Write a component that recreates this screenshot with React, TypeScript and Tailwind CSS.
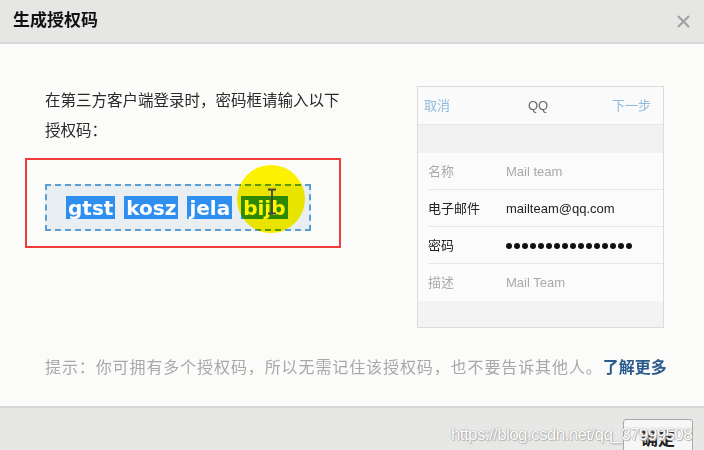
import React from "react";

const CJK = "font-['Liberation_Sans','Noto_Sans_CJK_SC',sans-serif]";

const ROWS = [
  { label: "名称", value: "Mail team", dim: true },
  { label: "电子邮件", value: "mailteam@qq.com", dim: false },
  { label: "密码", value: "", dim: false, dots: true },
  { label: "描述", value: "Mail Team", dim: true },
];

const WORDS = ["gtst", "kosz", "jela", "bijb"];

function PhonePanel() {
  return (
    <div className="ml-[76px] flex h-[242px] w-[247px] flex-col border border-[#dcdcdc] bg-[#fafafa]">
      {/* 顶部导航 */}
      <div className="flex h-[38px] items-center justify-between border-b border-[#e8e8e8] px-[6px] text-[13px]">
        <span className="text-[#8fbbe0]">取消</span>
        <span className="pl-[14px] text-[#666]">QQ</span>
        <span className="pr-[6px] text-[#8fbbe0]">下一步</span>
      </div>
      <div className="h-[28px] bg-[#f1f1f1]" />
      {ROWS.map((r, i) => (
        <div key={r.label} className="flex h-[37px] bg-[#fbfbfb] pl-[10px]">
          <div
            className={`flex flex-1 items-center pt-[1px] text-[13px] ${i < ROWS.length - 1 ? "border-b border-[#e6e6e6]" : ""}`}
          >
            <span className={`w-[78px] ${r.dim ? "text-[#aaa]" : "text-[#222]"}`}>{r.label}</span>
            {r.dots ? (
              <span className="flex gap-[2px]">
                {Array.from({ length: 16 }).map((_, k) => (
                  <span key={k} className="h-[6px] w-[6px] rounded-full bg-[#111]" />
                ))}
              </span>
            ) : (
              <span className={r.dim ? "text-[#aaa]" : "text-[#222]"}>{r.value}</span>
            )}
          </div>
        </div>
      ))}
      <div className="flex-1 bg-[#f3f3f3]" />
    </div>
  );
}

function CodeBox() {
  return (
    <div className="mt-[12px] h-[90px] w-[316px] border-2 border-[#f03c3c] pl-[18px] pt-[24px]">
      <div className="relative flex h-[47px] w-[266px] items-center gap-[9px] border-2 border-dashed border-[#5c9fd3] bg-[#e8eef2] pl-[19px]">
        {WORDS.map((w) => (
          <span
            key={w}
            className="flex h-[23px] items-center bg-[#2e8ff0] px-[2px] font-['DejaVu_Sans',sans-serif] text-[20px] font-bold leading-none text-white"
          >
            {w}
          </span>
        ))}
        {/* 鼠标高亮圈 */}
        <div className="absolute left-[190px] top-[-21px] h-[68px] w-[68px] rounded-full bg-[#fff500] mix-blend-multiply" />
        {/* I 型光标 */}
        <svg className="absolute left-[220px] top-[2px]" width="10" height="27" viewBox="0 0 10 27">
          <path d="M1 1.5h3l1 1 1-1h3M5 2.5v22M1 25.5h3l1-1 1 1h3" stroke="#444" strokeWidth="1.8" fill="none" />
        </svg>
      </div>
    </div>
  );
}

export default function App() {
  return (
    <div className={`relative flex h-[450px] w-[704px] flex-col overflow-hidden bg-[#fbfbfa] ${CJK}`}>
      {/* 标题栏 */}
      <div className="flex h-[44px] shrink-0 items-center justify-between border-b-2 border-[#d6d6d6] bg-[#e6e6e5] pl-[13px] pr-[14px]">
        <span className="text-[17px] font-bold text-[#111]">生成授权码</span>
        <svg width="13" height="13" viewBox="0 0 13 13">
          <path d="M1 1l11 11M12 1L1 12" stroke="#a0a0a0" strokeWidth="2" />
        </svg>
      </div>

      {/* 内容 */}
      <div className="flex flex-1 flex-col pt-[42px]">
        <div className="flex pl-[25px]">
          <div className="flex flex-col">
            <p className="pl-[20px] text-[15.5px] leading-[30px] text-[#2a2a2a]">
              在第三方客户端登录时，密码框请输入以下
              <br />
              授权码：
            </p>
            <CodeBox />
          </div>
          <PhonePanel />
        </div>
        <p className="mt-[30px] pl-[45px] text-[16px] leading-[20px] tracking-[0.9px] text-[#a8a8a8]">
          提示：你可拥有多个授权码，所以无需记住该授权码，也不要告诉其他人。
          <span className="font-bold tracking-[0px] text-[#2b5a8c]">了解更多</span>
        </p>
      </div>

      {/* 底部 */}
      <div className="relative flex h-[44px] shrink-0 justify-end border-t-2 border-[#d6d6d6] bg-[#e7e7e6] pr-[11px] pt-[11px]">
        <div className="flex h-[40px] w-[70px] items-start justify-center rounded-[3px] border border-[#a8a8a8] bg-[#f7f7f7] pt-[7px] text-[17px] font-bold text-[#222]">
          确定
        </div>
        <span className="absolute right-[12px] top-[14px] font-['Liberation_Sans',sans-serif] text-[17px] tracking-[-0.6px] text-white [text-shadow:0_0_1px_#999,0_0_1px_#999,1px_1px_1px_#bbb]">
          https://blog.csdn.net/qq_37999508
        </span>
      </div>
    </div>
  );
}
